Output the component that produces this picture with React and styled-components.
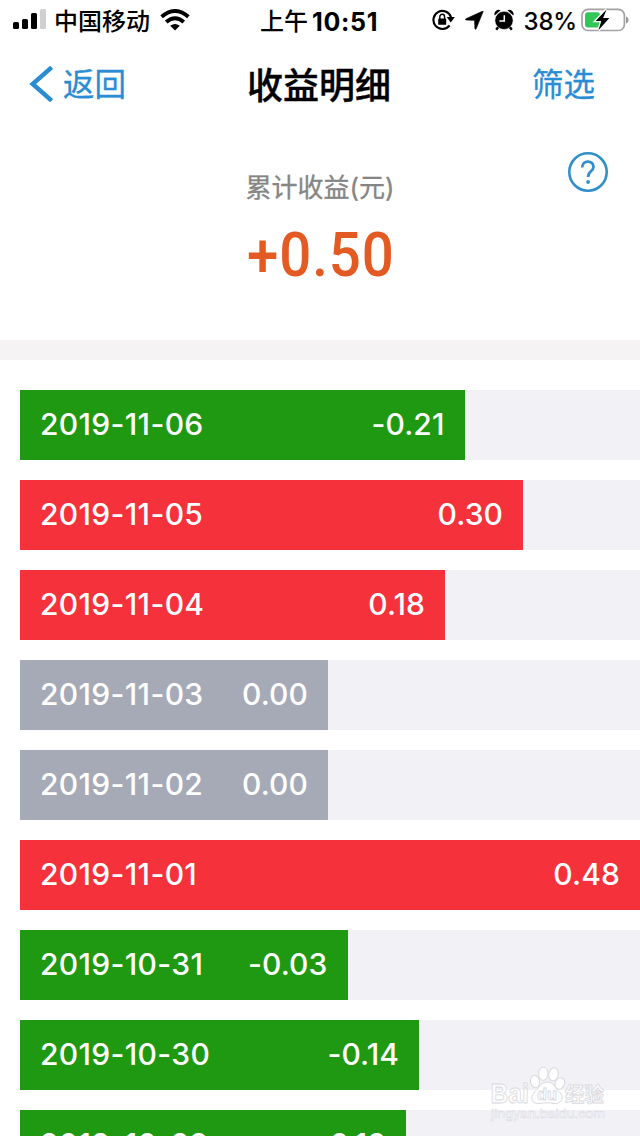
import React from 'react';
import styled, { createGlobalStyle } from 'styled-components';

const GlobalStyle = createGlobalStyle`
  * { box-sizing: border-box; }
  body { margin: 0; background: #fff; }
`;

const Screen = styled.div`
  position: relative;
  width: 640px;
  height: 1136px;
  overflow: hidden;
  background: #fff;
  font-family: Inter, "Noto Sans CJK SC", sans-serif;
`;

const StatusBar = styled.header`
  display: grid;
  grid-template-columns: 260px 1fr auto;
  height: 40px;
  padding: 0 11px 0 13px;
  color: #000;
`;

const StatusGroup = styled.div`
  display: flex;
  align-items: center;
  height: 40px;
  white-space: nowrap;
`;

const Carrier = styled.span`
  margin: 0 10px 0 8px;
  padding-top: 3px;
  font-size: 24px;
  font-weight: 500;
  line-height: 38px;
`;

const Clock = styled(StatusGroup)`
  margin-left: -13px;
  padding-top: 3px;
  font-size: 24px;
  font-weight: 500;
  line-height: 38px;
`;

const ClockDigits = styled.span`
  margin-left: 4px;
  font-size: 25px;
  font-weight: 700;
  letter-spacing: 0.7px;
`;

const Battery = styled.span`
  margin: 0 4px 0 10px;
  padding-top: 2px;
  font-size: 24px;
  font-weight: 500;
  letter-spacing: -0.2px;
`;

const NavBar = styled.nav`
  display: grid;
  grid-template-columns: 1fr auto 1fr;
  align-items: center;
  height: 88px;
  padding: 0 45px 0 29px;
`;

const NavAction = styled.a`
  display: flex;
  align-items: center;
  justify-self: ${(p) => p.$side};
  gap: 9px;
  color: #2a8cd3;
  font-size: 31.5px;
  line-height: 46px;
  -webkit-text-stroke: 0.3px #2a8cd3;
`;

const NavText = styled.span`
  padding-top: 2px;
`;

const Title = styled.h1`
  margin: 0 0 0 14px;
  padding-top: 4px;
  color: #000;
  font-size: 36px;
  font-weight: 500;
  line-height: 52px;
  -webkit-text-stroke: 0.4px #000;
`;

const Summary = styled.section`
  display: grid;
  grid-template-columns: 1fr auto 1fr;
  height: 212px;
  padding: 24px 32px 0;
`;

const SummaryText = styled.div`
  grid-column: 2;
  display: flex;
  flex-direction: column;
  align-items: center;
  padding-top: 17px;
`;

const Label = styled.span`
  color: #858585;
  font-size: 26px;
  line-height: 38px;
  white-space: nowrap;
  -webkit-text-stroke: 0.3px #858585;
`;

const Total = styled.strong`
  margin-top: 13px;
  padding-left: 2px;
  color: #e35a22;
  font-family: Roboto, sans-serif;
  font-size: 61px;
  font-weight: 500;
  line-height: 71px;
  letter-spacing: 1px;
  transform: scaleX(0.925);
`;

const HelpButton = styled.a`
  justify-self: end;
  height: 40px;
`;

const Divider = styled.div`
  height: 20px;
  background: #f5f3f4;
`;

const List = styled.ul`
  display: flex;
  flex-direction: column;
  gap: 20px;
  margin: 0;
  padding: 30px 0 0 20px;
  list-style: none;
`;

const Track = styled.li`
  flex: none;
  height: 70px;
  background: #f1f1f6;
`;

const tones = { loss: '#1f9911', gain: '#f5323b', flat: '#a6aab7' };

const Bar = styled.div`
  display: flex;
  align-items: center;
  justify-content: space-between;
  height: 70px;
  padding: 0 20px 2px;
  background: ${(p) => tones[p.$tone]};
  color: #fff;
  font-size: 30px;
  font-weight: 500;
  white-space: nowrap;
`;

const DateText = styled.span`
  letter-spacing: 0.35px;
`;

const Value = styled.span`
  letter-spacing: 0.1px;
`;

const Watermark = styled.aside`
  position: absolute;
  left: 488px;
  top: 1064px;
  line-height: 0;
`;

const rows = [
  { date: '2019-11-06', value: '-0.21', tone: 'loss', width: 444.5 },
  { date: '2019-11-05', value: '0.30', tone: 'gain', width: 503 },
  { date: '2019-11-04', value: '0.18', tone: 'gain', width: 425 },
  { date: '2019-11-03', value: '0.00', tone: 'flat', width: 308 },
  { date: '2019-11-02', value: '0.00', tone: 'flat', width: 308 },
  { date: '2019-11-01', value: '0.48', tone: 'gain', width: 620 },
  { date: '2019-10-31', value: '-0.03', tone: 'loss', width: 327.5 },
  { date: '2019-10-30', value: '-0.14', tone: 'loss', width: 399 },
  { date: '2019-10-29', value: '-0.12', tone: 'loss', width: 386 },
];

const SignalIcon = () => (
  <svg width="33" height="22" viewBox="0 0 33 22">
    <rect x="0" y="13" width="6" height="7" rx="1.5" />
    <rect x="9" y="10" width="6" height="10" rx="1.5" />
    <rect x="18" y="4" width="6" height="16" rx="1.5" />
    <rect x="27" y="0" width="6" height="20" rx="1.5" fill="#d0d0d0" />
  </svg>
);

const WifiIcon = () => (
  <svg width="30" height="22" viewBox="0 0 30 22">
    <g fill="none" stroke="#000" strokeWidth="3.9">
      <path d="M1.6 7.8 Q15 -3.8 28.4 7.8" />
      <path d="M6.2 13 Q15 5.4 23.8 13" />
    </g>
    <path d="M10.2 16.8 Q15 13 19.8 16.8 L15 21.6Z" />
  </svg>
);

const RotationLockIcon = () => (
  <svg width="23" height="22" viewBox="0 0 23 22">
    <path d="M17.6 16.4 A9 9 0 1 1 19 8.2" fill="none" stroke="#000" strokeWidth="2.1" />
    <path d="M14.6 8 H22.8 L18.8 13.4Z" />
    <rect x="6.2" y="9.6" width="8" height="6.2" rx="0.9" />
    <path d="M7.8 10 V7.9 a2.4 2.6 0 0 1 4.8 0 V10" fill="none" stroke="#000" strokeWidth="1.4" />
  </svg>
);

const LocationIcon = () => (
  <svg width="19" height="19" viewBox="0 0 19 19" style={{ marginLeft: 10 }}>
    <path d="M18.2 0.6 L11.2 17.8 Q10.5 19.1 9.8 17.6 L9.5 9.4 L1 9.1 Q-0.4 8.6 0.9 7.7 L17.2 0.3 Q18.6 -0.3 18.2 0.6Z" stroke="#000" strokeWidth="0.5" />
  </svg>
);

const AlarmIcon = () => (
  <svg width="20" height="22" viewBox="0 0 20 22" style={{ marginLeft: 10 }}>
    <path d="M0.7 6.6 A4.3 4.3 0 0 1 6.6 1.2Z M13.4 1.2 A4.3 4.3 0 0 1 19.3 6.6Z" />
    <circle cx="10" cy="11.4" r="9.1" stroke="#fff" strokeWidth="0.5" />
    <path d="M4.1 18.2 L2.2 20.8 M15.9 18.2 L17.8 20.8" stroke="#000" strokeWidth="2.4" />
    <path d="M10.3 6.3 V12 H5.4" fill="none" stroke="#fff" strokeWidth="1.5" />
  </svg>
);

const BatteryIcon = () => (
  <svg width="48" height="24" viewBox="0 0 48 24">
    <rect x="1" y="1.3" width="42.4" height="21.2" rx="6" fill="#fff" stroke="#a2a2a2" strokeWidth="1.7" />
    <path d="M45 8.2 Q47.6 9.2 47.6 12 Q47.6 14.8 45 15.8Z" fill="#999" />
    <rect x="4" y="4.2" width="15" height="15.4" rx="3" fill="#32c658" />
    <path d="M25.2 1.6 L14.6 12.9 H20.3 L17.6 22.2 L28.4 10.1 H22.1Z" fill="#fff" stroke="#fff" strokeWidth="2.6" />
    <path d="M25.6 1.6 L14.6 12.9 H20.3 L17.4 22.2 L28.4 10.1 H22.1Z" />
  </svg>
);

const BackIcon = () => (
  <svg width="25" height="36" viewBox="0 0 25 36">
    <path d="M22.7 1.3 L3.6 18 L22.7 34.7" fill="none" stroke="#2a8cd3" strokeWidth="4.4" />
  </svg>
);

const HelpIcon = () => (
  <svg width="40" height="40" viewBox="0 0 40 40" fill="none" stroke="#318fc9">
    <circle cx="20" cy="20" r="18.7" strokeWidth="2.6" />
    <path d="M14.2 15.4 C14.2 7.7 25.5 7.6 25.5 15 C25.5 19.2 20.1 19.2 20.1 25" strokeWidth="2.7" />
    <circle cx="20.1" cy="30" r="1.9" fill="#318fc9" stroke="none" />
  </svg>
);

const BaiduWatermark = () => (
  <svg width="122" height="58" viewBox="0 0 122 58">
    <g fill="#fdfdfe" stroke="#d9d9de" strokeWidth="1">
      <ellipse cx="47" cy="17.5" rx="4.5" ry="6.2" transform="rotate(-12 47 17.5)" />
      <ellipse cx="55.3" cy="9.7" rx="4.7" ry="6.6" />
      <ellipse cx="65.5" cy="10.3" rx="4.7" ry="6.6" transform="rotate(12 65.5 10.3)" />
      <ellipse cx="71.8" cy="19.5" rx="4.6" ry="6" transform="rotate(22 71.8 19.5)" />
      <path d="M59.5 18 C66 18 67 24.5 71.5 28 C77 33 73.5 40.5 66 39.5 C61 38.5 57 38.5 52 39.5 C44 40.5 41 34 46.5 28 C51 24 53 18 59.5 18Z" />
    </g>
    <g fontFamily="Liberation Sans, sans-serif" fill="#fdfdfe" stroke="#d9d9de" strokeWidth="0.8">
      <text x="2.5" y="38.5" fontSize="27" fontWeight="700" textLength="38.5" lengthAdjust="spacingAndGlyphs">Bai</text>
      <text x="49" y="36" fontSize="17" fontWeight="700" textLength="20" lengthAdjust="spacingAndGlyphs">du</text>
      <text x="77" y="37.5" fontSize="20" fontWeight="700" fontFamily="Noto Sans CJK SC, sans-serif" textLength="39" lengthAdjust="spacingAndGlyphs">经验</text>
      <text x="3" y="53.5" fontSize="13.5" textLength="114" lengthAdjust="spacingAndGlyphs" strokeWidth="0.5">jingyan.baidu.com</text>
    </g>
  </svg>
);

export default function App() {
  return (
    <Screen>
      <GlobalStyle />
      <StatusBar>
        <StatusGroup>
          <SignalIcon />
          <Carrier>中国移动</Carrier>
          <WifiIcon />
        </StatusGroup>
        <Clock>
          上午<ClockDigits>10:51</ClockDigits>
        </Clock>
        <StatusGroup>
          <RotationLockIcon />
          <LocationIcon />
          <AlarmIcon />
          <Battery>38%</Battery>
          <BatteryIcon />
        </StatusGroup>
      </StatusBar>
      <NavBar>
        <NavAction $side="start">
          <BackIcon />
          <NavText>返回</NavText>
        </NavAction>
        <Title>收益明细</Title>
        <NavAction $side="end">
          <NavText>筛选</NavText>
        </NavAction>
      </NavBar>
      <Summary>
        <SummaryText>
          <Label>累计收益(元)</Label>
          <Total>+0.50</Total>
        </SummaryText>
        <HelpButton>
          <HelpIcon />
        </HelpButton>
      </Summary>
      <Divider />
      <List>
        {rows.map((row) => (
          <Track key={row.date}>
            <Bar $tone={row.tone} style={{ width: row.width }}>
              <DateText>{row.date}</DateText>
              <Value>{row.value}</Value>
            </Bar>
          </Track>
        ))}
      </List>
      <Watermark>
        <BaiduWatermark />
      </Watermark>
    </Screen>
  );
}
